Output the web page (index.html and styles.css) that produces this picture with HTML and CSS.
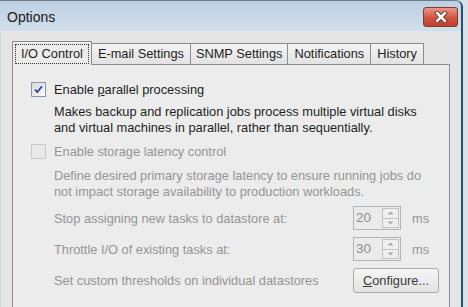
FILE: index.html
```html
<!DOCTYPE html>
<html>
    <head>
        <meta name="viewport" content="width=device-width">
        <title>Options</title>
        <link rel="stylesheet" href="styles.css">
    </head>
    <body>
        <div class="window">
            <div class="titlebar">
                <span class="title">Options</span>
                <div class="close">
                    <svg width="18" height="12" viewBox="0 0 18 12">
                        <path d="M5 2 L13 10 M13 2 L5 10" stroke="#6b2a22" stroke-width="4.4" stroke-linecap="round"/>
                        <path d="M5 2 L13 10 M13 2 L5 10" stroke="#ffffff" stroke-width="2.6" stroke-linecap="round"/>
                    </svg>
                </div>
            </div>
            <div class="client">
                <div class="tabs">
                    <div class="tab active"><span class="focus">I/O Control</span></div>
                    <div class="tab">E-mail Settings</div>
                    <div class="tab snmp">SNMP Settings</div>
                    <div class="tab">Notifications</div>
                    <div class="tab">History</div>
                </div>
                <div class="panel">
                    <div class="check-row">
                        <span class="box checked">
                            <svg width="9" height="9" viewBox="0 0 9 9"><path d="M1 4.5 L3.3 7 L8 1.2" fill="none" stroke="#2c4a8c" stroke-width="1.8"/></svg>
                        </span>
                        <span>Enable <u>p</u>arallel processing</span>
                    </div>
                    <div class="desc first">
                        Makes backup and replication jobs process multiple virtual disks<br>
                        and virtual machines in parallel, rather than sequentially.
                    </div>
                    <div class="check-row second off">
                        <span class="box"></span>
                        <span>Enable storage latency control</span>
                    </div>
                    <div class="desc off">
                        Define desired primary storage latency to ensure running jobs do<br>
                        not impact storage availability to production workloads.
                    </div>
                    <div class="setting off stop">
                        <span class="label">Stop assigning new tasks to datastore at:</span>
                        <div class="spin">
                            <span class="val">20</span>
                            <div class="arrows">
                                <span class="arr"><svg width="7" height="4" viewBox="0 0 7 4"><path d="M0.5 3.5 L3.5 0.5 L6.5 3.5 Z" fill="#a8a8a8"/></svg></span>
                                <span class="arr"><svg width="7" height="4" viewBox="0 0 7 4"><path d="M0.5 0.5 L3.5 3.5 L6.5 0.5 Z" fill="#a8a8a8"/></svg></span>
                            </div>
                        </div>
                        <span class="unit">ms</span>
                    </div>
                    <div class="setting off">
                        <span class="label">Throttle I/O of existing tasks at:</span>
                        <div class="spin">
                            <span class="val">30</span>
                            <div class="arrows">
                                <span class="arr"><svg width="7" height="4" viewBox="0 0 7 4"><path d="M0.5 3.5 L3.5 0.5 L6.5 3.5 Z" fill="#a8a8a8"/></svg></span>
                                <span class="arr"><svg width="7" height="4" viewBox="0 0 7 4"><path d="M0.5 0.5 L3.5 3.5 L6.5 0.5 Z" fill="#a8a8a8"/></svg></span>
                            </div>
                        </div>
                        <span class="unit">ms</span>
                    </div>
                    <div class="setting off custom">
                        <span class="label">Set custom thresholds on individual datastores</span>
                        <button class="btn"><u>C</u>onfigure...</button>
                    </div>
                </div>
            </div>
        </div>
    </body>
</html>
```

FILE: styles.css
```css
html, body{
    margin:0;
    height:100%;
    overflow:hidden;
}
body{
    background:#d9e2ea;
    font-family:"Liberation Sans", Arial, sans-serif;
    font-size:12.8px;
    color:#1e1e1e;
}
.window{
    width:461px;
    height:307px;
    border-top:1px solid #6d7c8b;
    border-right:2px solid #23506c;
    border-top-right-radius:7px;
    background:#e5e5e5;
    overflow:hidden;
}
.titlebar{
    height:30px;
    display:flex;
    align-items:center;
    justify-content:space-between;
    background:linear-gradient(#bccfe2, #d2dfec);
    border-bottom:1px solid #dfe7ef;
}
.title{
    font-size:14px;
    color:#1a1a1a;
    margin-left:7px;
    margin-top:2px;
}
.close{
    width:33px;
    height:18px;
    margin-right:3px;
    margin-top:2px;
    border:1px solid #7e3a30;
    border-radius:3px;
    background:linear-gradient(#e9988a, #d0533f 55%, #c2402c);
    display:flex;
    align-items:center;
    justify-content:center;
}
.client{
    padding:9px 0 0 11px;
    border-left:1px solid #d0d8e0;
}
.tabs{
    display:flex;
    align-items:flex-end;
    height:23px;
    position:relative;
    z-index:1;
}
.tab{
    height:21px;
    line-height:20px;
    padding:0 6px;
    border:1px solid #8c8c8c;
    border-bottom:none;
    border-left:none;
    background:linear-gradient(#f4f4f4, #e2e2e2);
    box-sizing:border-box;
    color:#1e1e1e;
}
.tab.snmp{
    padding:0 5px;
}
.tab.active{
    height:24px;
    margin-bottom:-1px;
    border-left:1px solid #8c8c8c;
    background:#ececec;
    padding:2px 2px 0 2px;
    line-height:18px;
}
.focus{
    display:block;
    border:1px dotted #333;
    padding:0 5px;
    height:18px;
}
.panel{
    width:438px;
    height:260px;
    border:1px solid #8c8c8c;
    background:#ececec;
    padding:17px 10px 0 18px;
    box-sizing:border-box;
}
.check-row{
    display:flex;
    align-items:center;
    height:15px;
}
.box{
    width:13px;
    height:13px;
    border:1px solid #8597a8;
    background:linear-gradient(135deg, #d6d9dd, #fbfbfb);
    margin-right:8px;
    display:flex;
    align-items:center;
    justify-content:center;
}
.check-row.off .box{
    border-color:#c9c9c9;
    background:#e9e9e9;
}
.off{
    color:#949494;
}
.desc{
    margin-left:23px;
    line-height:16px;
    margin-top:7px;
}
.second{
    margin-top:8px;
}
.desc.off{
    margin-top:9px;
}
.setting{
    display:flex;
    align-items:center;
    margin-left:23px;
    margin-top:7px;
    height:24px;
}
.setting.stop{
    margin-top:6px;
}
.setting.custom{
    height:25px;
}
.label{
    flex:1;
}
.spin{
    width:48px;
    height:24px;
    box-sizing:border-box;
    border:1px solid #b4b4b4;
    display:flex;
    background:#ebebeb;
}
.val{
    flex:1;
    font-size:13.5px;
    line-height:22px;
    padding-left:2px;
    color:#8e8e8e;
}
.arrows{
    width:17px;
    margin:1px 1px 1px 0;
    display:flex;
    flex-direction:column;
}
.arr{
    flex:1;
    border:1px solid #c3c3c3;
    background:#efefef;
    display:flex;
    align-items:center;
    justify-content:center;
}
.arr + .arr{
    border-top:none;
}
.unit{
    width:38px;
    padding-left:11px;
    box-sizing:border-box;
}
.btn{
    width:86px;
    height:25px;
    border:1px solid #a9a9a9;
    border-radius:3px;
    background:linear-gradient(#f5f5f5, #e3e3e3);
    font-family:"Liberation Sans", Arial, sans-serif;
    font-size:12.8px;
    color:#3a3a3a;
    padding:0;
}
```
